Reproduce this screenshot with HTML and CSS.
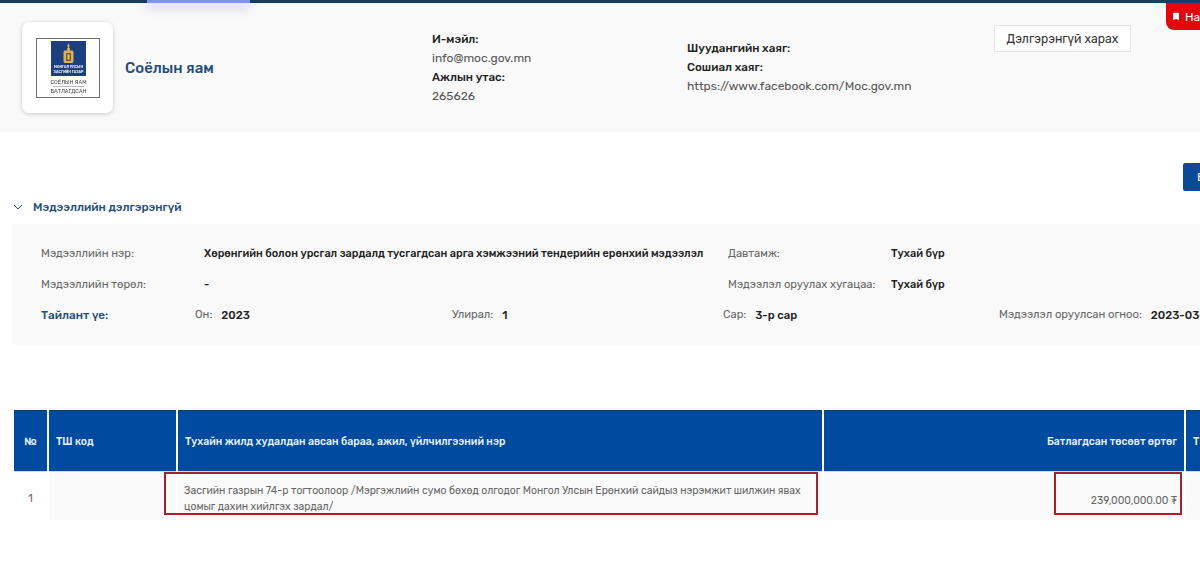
FILE: index.html
```html
<html>
    <head>
        <meta charset="utf-8">
        <link rel="stylesheet" href="styles.css">
    </head>
    <body>
        <div class="topbar"></div>
        <div class="nav-glow"></div>
        <div class="save-tab">
            <svg class="save-icon" viewBox="0 0 7 9"><path d="M0 1q0-1 1-1h5q1 0 1 1v8L3.500 7 0 9z"/></svg>
            <span>На</span>
        </div>

        <div class="org">
            <div class="org-logo">
                <svg viewBox="0 0 64 60" class="logo-svg">
                    <rect x="0.500" y="0.500" width="63" height="59" fill="#fff" stroke="#6f6f6f"/>
                    <rect x="15" y="3" width="35" height="35" fill="#1c3f7f"/>
                    <path d="M32.500 5l1.200 3-.7 1.200 1.200 2-.8 1.300h3.300l.8 1.500v9.500l-1 1.500h-8l-1-1.500V14l.8-1.500h3.300l-.8-1.300 1.200-2-.7-1.200z" fill="#d9b25a"/>
                    <path d="M30 15h5v8h-5z" fill="#7a5a30"/>
                    <path d="M31.500 16.500h2v5h-2z" fill="#e6c873"/>
                    <text x="32.500" y="30" class="logo-tiny">МОНГОЛ УЛСЫН</text>
                    <text x="32.500" y="35" class="logo-tiny">ЗАСГИЙН ГАЗАР</text>
                    <text x="32.500" y="46" class="logo-name">СОЁЛЫН ЯАМ</text>
                    <rect x="17" y="48" width="31" height="1" fill="#bbb"/>
                    <text x="32.500" y="55" class="logo-name">БАТЛАГДСАН</text>
                </svg>
            </div>
            <div class="org-name">Соёлын яам</div>
            <div class="org-col">
                <b>И-мэйл:</b>
                <span>info@moc.gov.mn</span>
                <b>Ажлын утас:</b>
                <span>265626</span>
            </div>
            <div class="org-col">
                <b>Шуудангийн хаяг:</b>
                <b>Сошиал хаяг:</b>
                <span>https://www.facebook.com/Moc.gov.mn</span>
            </div>
            <div><button class="more-btn">Дэлгэрэнгүй харах</button></div>
        </div>

        <div class="toolbar">
            <button class="blue-btn">Б</button>
        </div>

        <div class="section-title">
            <svg class="chevron" viewBox="0 0 10 6"><path d="M1 1l4 4 4-4" fill="none" stroke="#1f4e79" stroke-width="1"/></svg>
            <span>Мэдээллийн дэлгэрэнгүй</span>
        </div>

        <div class="details">
            <div class="detail-row">
                <span class="lbl">Мэдээллийн нэр:</span>
                <span class="val">Хөрөнгийн болон урсгал зардалд тусгагдсан арга хэмжээний тендерийн ерөнхий мэдээлэл</span>
                <span class="lbl">Давтамж:</span>
                <span class="val">Тухай бүр</span>
            </div>
            <div class="detail-row">
                <span class="lbl">Мэдээллийн төрөл:</span>
                <span class="val">-</span>
                <span class="lbl">Мэдээлэл оруулах хугацаа:</span>
                <span class="val">Тухай бүр</span>
            </div>
            <div class="period-row">
                <span class="period-title">Тайлант үе:</span>
                <div class="period"><span class="lbl">Он:</span><span class="val">2023</span></div>
                <div class="period"><span class="lbl">Улирал:</span><span class="val">1</span></div>
                <div class="period"><span class="lbl">Сар:</span><span class="val">3-р сар</span></div>
                <div class="period"><span class="lbl">Мэдээлэл оруулсан огноо:</span><span class="val">2023-03-</span></div>
            </div>
        </div>

        <div class="table-wrap">
            <table class="data-table">
                <thead>
                    <tr>
                        <th class="c-no">№</th>
                        <th class="c-code">ТШ код</th>
                        <th class="c-name">Тухайн жилд худалдан авсан бараа, ажил, үйлчилгээний нэр</th>
                        <th class="c-cost">Батлагдсан төсөвт өртөг</th>
                        <th class="c-next">Т</th>
                    </tr>
                </thead>
                <tbody>
                    <tr>
                        <td class="cell-no">1</td>
                        <td></td>
                        <td class="cell-name">Засгийн газрын 74-р тогтоолоор /Мэргэжлийн сумо бөхөд олгодог Монгол Улсын Ерөнхий сайдыз нэрэмжит шилжин явах цомыг дахин хийлгэх зардал/</td>
                        <td class="cell-cost">239,000,000.00 ₮</td>
                        <td></td>
                    </tr>
                </tbody>
            </table>
            <div class="mark mark-name"></div>
            <div class="mark mark-cost"></div>
        </div>
    </body>
</html>
```

FILE: styles.css
```css
html, body{
    margin: 0;
    height: 561px;
    overflow: hidden;
    background-color: #fff;
    font-family: Rubik, Roboto, "Noto Sans", sans-serif;
    color: #333;
}
.topbar{
    height: 3px;
    background-color: #123f63;
}
.nav-glow{
    position: absolute;
    left: 147px;
    top: 0;
    width: 103px;
    height: 3px;
    background-color: #7d95e6;
    box-shadow: 0 5px 10px rgba(70, 70, 90, .35);
}
.save-tab{
    position: absolute;
    left: 1166px;
    top: 3px;
    width: 34px;
    height: 27px;
    box-sizing: border-box;
    padding-left: 7px;
    display: flex;
    align-items: center;
    gap: 6px;
    overflow: hidden;
    background-color: #e3060f;
    border-bottom-left-radius: 8px;
    color: #fff;
    font-size: 12px;
    white-space: nowrap;
}
.save-icon{
    flex: none;
    width: 6px;
    height: 9px;
    fill: #fff;
}
.org{
    display: grid;
    grid-template-columns: 91px 319px 255px 307px auto;
    padding: 19px 0 19px 22px;
    height: 91px;
    background-color: #f9f9fa;
}
.org-logo{
    width: 91px;
    height: 91px;
    box-sizing: border-box;
    padding: 16px 14px;
    background-color: #fff;
    border-radius: 7px;
    box-shadow: 0 1px 4px rgba(0, 0, 0, .2);
}
.logo-svg{
    display: block;
    width: 64px;
    height: 60px;
    filter: blur(.3px);
}
.logo-tiny{
    font-size: 3.500px;
    font-weight: 700;
    fill: #e8e8f0;
    text-anchor: middle;
}
.logo-name{
    font-size: 5.500px;
    fill: #444;
    text-anchor: middle;
}
.org-name{
    align-self: center;
    padding-left: 12px;
    font-size: 15px;
    font-weight: 500;
    color: #1f4e79;
}
.org-col{
    align-self: center;
    display: flex;
    flex-direction: column;
    font-size: 12px;
    line-height: 19px;
}
.org-col b{
    font-size: 11.600px;
    font-weight: 500;
    color: #222;
}
.org-col span{
    color: #555;
}
.more-btn{
    display: block;
    width: 137px;
    height: 27px;
    margin-top: 3px;
    background-color: #fff;
    border: solid 1px #e6e6e6;
    font-family: inherit;
    font-size: 12.200px;
    color: #333;
}
.toolbar{
    height: 28px;
    margin-top: 31px;
    padding-left: 1183px;
}
.blue-btn{
    display: block;
    width: 40px;
    height: 28px;
    padding: 0 0 0 14px;
    text-align: left;
    background-color: #0b4a96;
    border: 0;
    border-radius: 2px 0 0 2px;
    color: #fff;
    font-family: inherit;
    font-size: 12px;
}
.section-title{
    display: flex;
    align-items: center;
    gap: 10px;
    height: 18px;
    margin-top: 7px;
    padding-left: 13px;
    font-size: 11.700px;
    font-weight: 500;
    color: #1f4e79;
}
.chevron{
    width: 10px;
    height: 6px;
}
.details{
    margin: 8px 0 0 12px;
    height: 121px;
    box-sizing: border-box;
    padding: 14px 0 0 29px;
    background-color: #f9f9f9;
    border-radius: 4px 0 0 4px;
    font-size: 11.200px;
}
.detail-row{
    display: grid;
    grid-template-columns: 163px 524px 163px auto;
    height: 31px;
    line-height: 31px;
    white-space: nowrap;
}
.period-row{
    display: grid;
    grid-template-columns: 154px 257px 271px 276px auto;
    height: 30px;
    line-height: 30px;
    white-space: nowrap;
}
.period{
    display: flex;
    gap: 9px;
}
.lbl{
    color: #666;
}
.val{
    font-size: 10.900px;
    color: #222;
    font-weight: 500;
}
.period .val{
    font-size: 11.300px;
}
.period-title{
    color: #1f4e79;
    font-size: 11.700px;
    font-weight: 500;
}
.table-wrap{
    position: relative;
    margin: 65px 0 0 14px;
}
.data-table{
    table-layout: fixed;
    width: 1212px;
    border-collapse: separate;
    border-spacing: 2px 0;
    margin-left: -2px;
    font-size: 10.400px;
}
.data-table th{
    height: 62px;
    padding: 0 7px;
    background-color: #004a9f;
    border-top: solid 1px #123f63;
    border-bottom: solid 1px #bfe3f5;
    color: #e8f2fa;
    font-size: 10.500px;
    font-weight: 500;
    text-align: left;
}
.c-no{
    width: 19px;
    text-align: center !important;
}
.c-code{
    width: 113px;
}
.c-name{
    width: 630px;
}
.c-cost{
    width: 346px;
    text-align: right !important;
}
.data-table td{
    height: 48px;
    padding: 0 7px;
    background-color: #fafafa;
    color: #666;
    vertical-align: middle;
}
.data-table td:first-child{
    background-color: #fff;
}
.cell-no{
    text-align: center;
    padding-top: 5px !important;
}
.cell-name{
    line-height: 16px;
    padding: 5px 7px 0 6px !important;
}
.cell-cost{
    text-align: right;
    padding-top: 8px !important;
}
.mark{
    position: absolute;
    top: 62px;
    height: 43px;
    box-sizing: border-box;
    border: solid 2px #a8202b;
}
.mark-name{
    left: 150px;
    width: 654px;
}
.mark-cost{
    left: 1040px;
    width: 128px;
}
```
